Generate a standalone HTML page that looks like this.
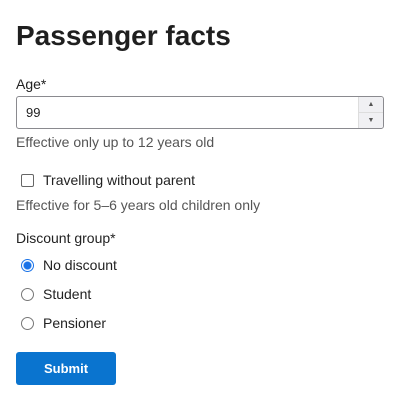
<!DOCTYPE html>
<html><head><style>
body{margin:0;width:400px;height:406px;background:#fff;font-family:"Liberation Sans",Arial,sans-serif;color:#222;position:relative}
.a{position:absolute;white-space:nowrap}
h1{position:absolute;left:16px;top:18px;margin:0;font-size:28px;font-weight:bold;line-height:36px;color:#1f1f1f}
.t{font-size:14px;line-height:18px}
.h{color:#555}
.inp{position:absolute;left:16px;top:96px;width:366px;height:31px;border:1px solid #8a8a8f;border-radius:3px;box-sizing:content-box}
.spin{position:absolute;right:0;top:0;width:24px;height:31px;background:#f0f0f3;border-left:1px solid #ddd;border-radius:0 3px 3px 0}
.spin div{height:15px;font-size:7px;text-align:center;line-height:15px;color:#555}
.cb{position:absolute;left:21px;top:174px;width:11px;height:11px;border:1px solid #666;border-radius:2px}
.r{position:absolute;left:21px;width:11px;height:11px;border:1px solid #777;border-radius:50%}
.btn{position:absolute;left:16px;top:352px;width:100px;height:33px;background:#0a74cf;border-radius:3px;color:#fff;font-weight:bold;font-size:13px;text-align:center;line-height:33px}
</style></head><body>
<h1>Passenger facts</h1>
<div class="a t" style="left:16px;top:75px">Age*</div>
<div class="inp"><div class="a t" style="left:9px;top:7px;font-size:13px">99</div><div class="spin"><div style="border-bottom:1px solid #ddd">&#9650;</div><div>&#9660;</div></div></div>
<div class="a t h" style="left:16px;top:133px">Effective only up to 12 years old</div>
<div class="cb"></div>
<div class="a t" style="left:43px;top:171px">Travelling without parent</div>
<div class="a t h" style="left:16px;top:196px">Effective for 5–6 years old children only</div>
<div class="a t" style="left:16px;top:229px">Discount group*</div>
<div class="r" style="top:259px;border:1px solid #1a73e8;background:radial-gradient(circle,#1a73e8 0 3.5px,#fff 4.5px)"></div>
<div class="a t" style="left:43px;top:256px">No discount</div>
<div class="r" style="top:288px"></div>
<div class="a t" style="left:43px;top:285px">Student</div>
<div class="r" style="top:317px"></div>
<div class="a t" style="left:43px;top:314px">Pensioner</div>
<div class="btn">Submit</div>
</body></html>
